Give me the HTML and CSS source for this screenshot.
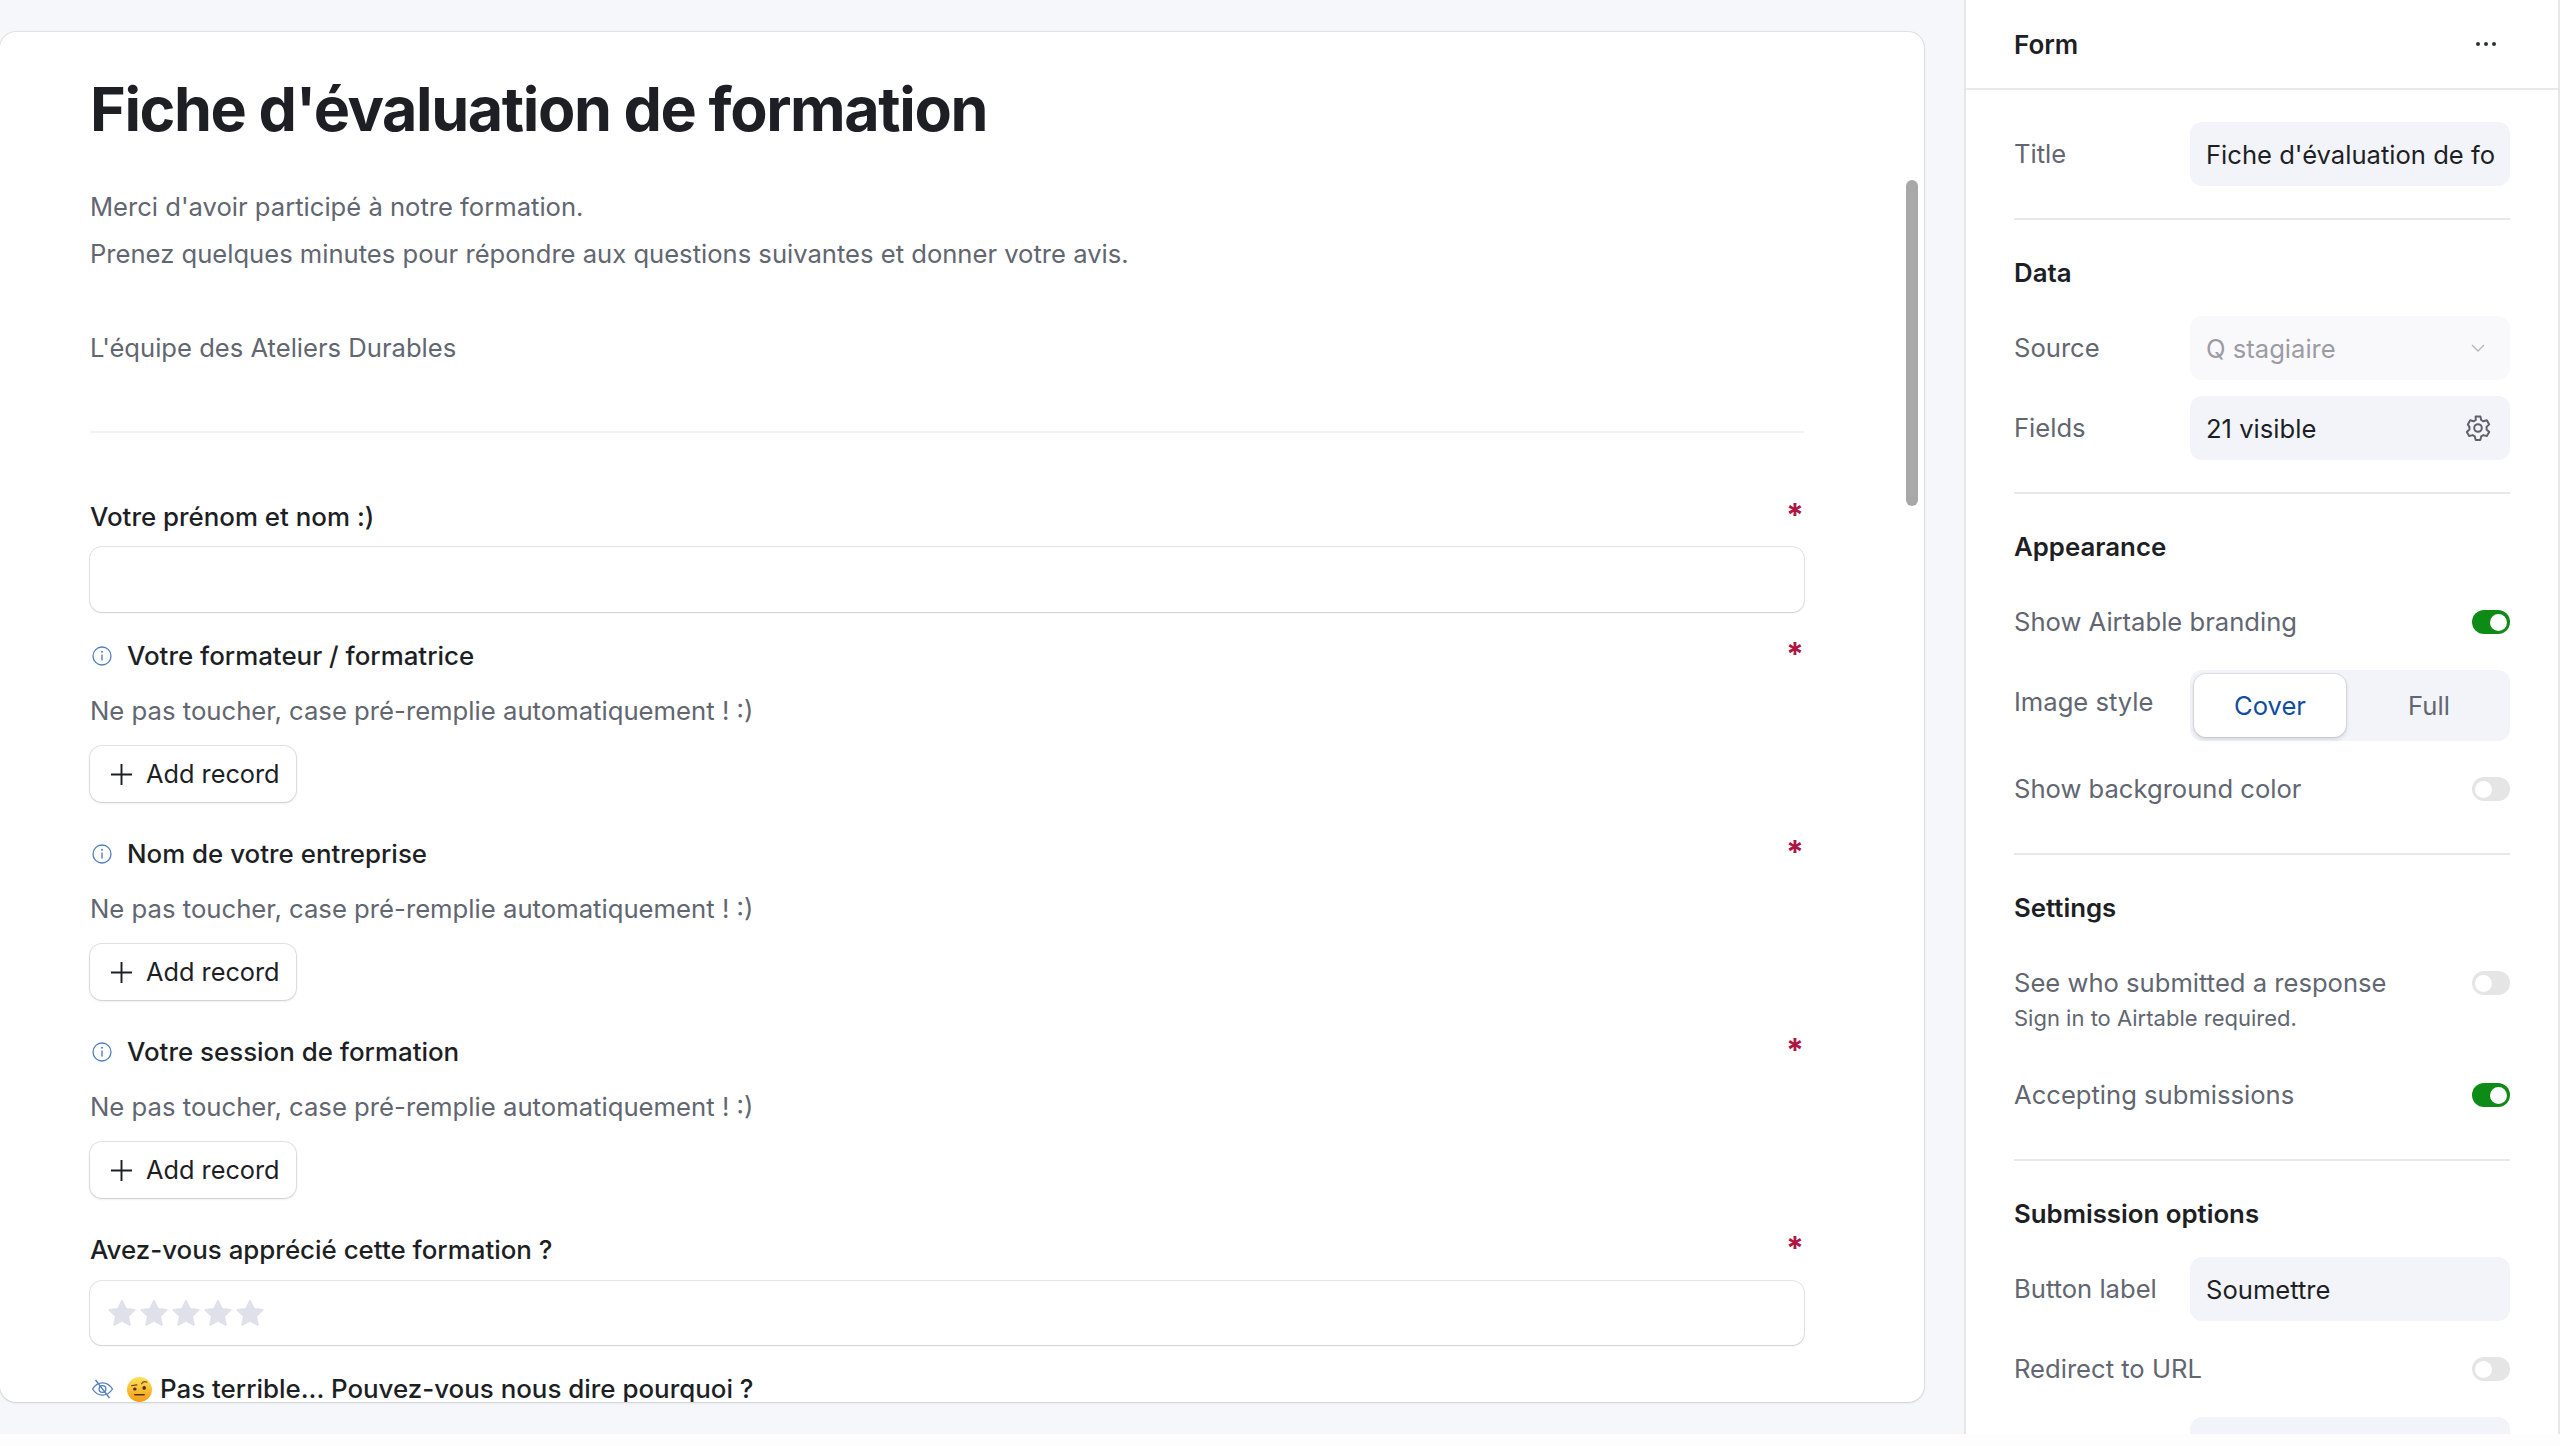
FILE: index.html
```html
<!DOCTYPE html>
<html lang="fr">
<head>
<meta charset="utf-8">
<title>Fiche d'évaluation de formation</title>
<link rel="stylesheet" href="styles.css">
</head>
<body>
<svg class="defs" width="0" height="0" aria-hidden="true">
  <defs>
    <symbol id="i-info" viewBox="0 0 20 20"><circle cx="10" cy="10" r="9" fill="none" stroke="currentColor" stroke-width="1.3"/><path d="M10 8.6v6" fill="none" stroke="currentColor" stroke-width="1.4"/><circle cx="10" cy="5.8" r="1" fill="currentColor"/></symbol>
    <symbol id="i-plus" viewBox="0 0 24 24"><path d="M12 1v22M1 12h22" fill="none" stroke="currentColor" stroke-width="2"/></symbol>
    <symbol id="i-star" viewBox="0 0 28 28"><path d="M14 1.5l3.9 8.2 8.9 1.2-6.5 6.2 1.6 8.9-7.9-4.3-7.9 4.3 1.6-8.9-6.5-6.2 8.9-1.2z" fill="currentColor" stroke="currentColor" stroke-width="1.6" stroke-linejoin="round"/></symbol>
  </defs>
</svg>
<div class="app">
  <main class="stage">
    <section class="card">
      <h1 class="form-title">Fiche d'évaluation de formation</h1>
      <div class="intro">
        <p>Merci d'avoir participé à notre formation.</p>
        <p>Prenez quelques minutes pour répondre aux questions suivantes et donner votre avis.</p>
        <p>&nbsp;</p>
        <p>L'équipe des Ateliers Durables</p>
      </div>
      <hr class="card-rule">

      <div class="field field-input">
        <div class="label-row"><span class="label-text">Votre prénom et nom :)</span><span class="req">*</span></div>
        <div class="box box-text"></div>
      </div>

      <div class="field field-link">
        <div class="label-row"><span class="label-text"><svg class="info"><use href="#i-info"/></svg>Votre formateur / formatrice</span><span class="req">*</span></div>
        <p class="hint">Ne pas toucher, case pré-remplie automatiquement ! :)</p>
        <div class="add"><svg class="plus"><use href="#i-plus"/></svg><span class="add-text">Add record</span></div>
      </div>

      <div class="field field-link">
        <div class="label-row"><span class="label-text"><svg class="info"><use href="#i-info"/></svg>Nom de votre entreprise</span><span class="req">*</span></div>
        <p class="hint">Ne pas toucher, case pré-remplie automatiquement ! :)</p>
        <div class="add"><svg class="plus"><use href="#i-plus"/></svg><span class="add-text">Add record</span></div>
      </div>

      <div class="field field-link">
        <div class="label-row"><span class="label-text"><svg class="info"><use href="#i-info"/></svg>Votre session de formation</span><span class="req">*</span></div>
        <p class="hint">Ne pas toucher, case pré-remplie automatiquement ! :)</p>
        <div class="add"><svg class="plus"><use href="#i-plus"/></svg><span class="add-text">Add record</span></div>
      </div>

      <div class="field field-input">
        <div class="label-row"><span class="label-text">Avez-vous apprécié cette formation ?</span><span class="req">*</span></div>
        <div class="box box-rating">
          <svg class="star"><use href="#i-star"/></svg>
          <svg class="star"><use href="#i-star"/></svg>
          <svg class="star"><use href="#i-star"/></svg>
          <svg class="star"><use href="#i-star"/></svg>
          <svg class="star"><use href="#i-star"/></svg>
        </div>
      </div>

      <div class="field">
        <div class="label-row"><span class="label-text">
          <svg class="eye" viewBox="0 0 22 20"><path d="M1 10c2.600-4 6-6.200 10-6.200S18.400 6 21 10c-2.600 4-6 6.200-10 6.200S3.600 14 1 10z" fill="none" stroke="currentColor" stroke-width="1.3"/><circle cx="11" cy="10" r="3.400" fill="none" stroke="currentColor" stroke-width="1.300"/><path d="M4 1l14 18" fill="none" stroke="currentColor" stroke-width="1.300"/></svg>
          <svg class="emoji" viewBox="0 0 24 24"><defs><linearGradient id="emo" x1="0" y1="0" x2="0" y2="1"><stop offset="0" stop-color="#fde25a"/><stop offset="1" stop-color="#f59a12"/></linearGradient></defs><circle cx="12" cy="12" r="12" fill="url(#emo)"/><ellipse cx="7.500" cy="11.500" rx="1.700" ry="1.500" fill="#4a3116"/><ellipse cx="16.500" cy="10.500" rx="1.700" ry="1.800" fill="#4a3116"/><path d="M4.500 8.300l5-.8M14 6.500c1.200-2 3.200-2.400 5-1.500" fill="none" stroke="#7a4d12" stroke-width="1.200" stroke-linecap="round"/><path d="M7.500 17h9" fill="none" stroke="#4a3116" stroke-width="1.500" stroke-linecap="round"/></svg>
          <span class="emoji-text">Pas terrible... Pouvez-vous nous dire pourquoi ?</span></span></div>
      </div>

      <div class="scrollbar"></div>
    </section>
  </main>

  <aside class="panel">
    <header class="panel-head">
      <span class="panel-name">Form</span>
      <svg class="dots" viewBox="0 0 20 4"><circle cx="2" cy="2" r="2"/><circle cx="10" cy="2" r="2"/><circle cx="18" cy="2" r="2"/></svg>
    </header>
    <div class="panel-body">
      <div class="row row-field">
        <span class="row-label">Title</span>
        <div class="control"><span class="control-text">Fiche d'évaluation de fo</span></div>
      </div>
      <hr class="rule">

      <h2 class="section">Data</h2>
      <div class="row row-field">
        <span class="row-label">Source</span>
        <div class="control control-off"><span class="control-text">Q stagiaire</span>
          <svg class="chev" viewBox="0 0 14 8"><path d="M1 1l6 6 6-6" fill="none" stroke="currentColor" stroke-width="1.400"/></svg>
        </div>
      </div>
      <div class="row row-field row-next">
        <span class="row-label">Fields</span>
        <div class="control"><span class="control-text">21 visible</span>
          <svg class="gear" viewBox="0 0 28 28"><path d="M11.600 2.500h4.800l.8 3.500 2.200 1.300 3.400-1 2.400 4.100-2.600 2.500v2.600l2.600 2.500-2.400 4.100-3.400-1-2.200 1.300-.8 3.500h-4.800l-.8-3.500-2.200-1.300-3.400 1-2.400-4.100 2.600-2.500v-2.600L3.800 10.400l2.400-4.100 3.400 1 2.200-1.300z" fill="none" stroke="currentColor" stroke-width="2" stroke-linejoin="round"/><circle cx="14" cy="14" r="3.800" fill="none" stroke="currentColor" stroke-width="2"/></svg>
        </div>
      </div>
      <hr class="rule">

      <h2 class="section">Appearance</h2>
      <div class="row row-toggle row-first"><span class="row-label">Show Airtable branding</span><span class="toggle on"><span class="knob"></span></span></div>
      <div class="row row-seg">
        <span class="row-label">Image style</span>
        <div class="seg"><span class="seg-item active">Cover</span><span class="seg-item">Full</span></div>
      </div>
      <div class="row row-toggle row-gap"><span class="row-label">Show background color</span><span class="toggle"><span class="knob"></span></span></div>
      <hr class="rule rule-wide">

      <h2 class="section">Settings</h2>
      <div class="row row-toggle row-first"><span class="row-label">See who submitted a response</span><span class="toggle"><span class="knob"></span></span></div>
      <p class="note">Sign in to Airtable required.</p>
      <div class="row row-toggle row-after-note"><span class="row-label">Accepting submissions</span><span class="toggle on"><span class="knob"></span></span></div>
      <hr class="rule rule-wide">

      <h2 class="section">Submission options</h2>
      <div class="row row-field">
        <span class="row-label">Button label</span>
        <div class="control"><span class="control-text">Soumettre</span></div>
      </div>
      <div class="row row-toggle row-gap"><span class="row-label">Redirect to URL</span><span class="toggle"><span class="knob"></span></span></div>
      <div class="row row-field row-gap">
        <span class="row-label"></span>
        <div class="control"></div>
      </div>
    </div>
  </aside>
</div>
</body>
</html>
```

FILE: styles.css
```css
* { box-sizing: border-box; }
html, body { margin: 0; height: 100%; }
body {
  background: #fdfdfd;
  font-family: Inter, "Noto Sans", "Liberation Sans", sans-serif;
  color: #1d1f25;
  overflow: hidden;
}
p, h1, h2 { margin: 0; }
.defs { display: block; height: 0; }

.app { display: flex; height: 1434px; overflow: hidden; }

.stage {
  width: 1964px;
  flex: none;
  padding: 32px 40px 32px 0;
  background: #f6f7fb;
}

.card {
  position: relative;
  height: 1370px;
  padding: 0 120px 0 90px;
  background: #fff;
  border-radius: 16px;
  box-shadow: 0 0 0 1px rgba(0, 0, 0, .07), 0 1px 3px rgba(0, 0, 0, .1);
  overflow: hidden;
}

.form-title {
  padding-top: 39px;
  font-size: 61px;
  line-height: 76px;
  font-weight: 700;
  letter-spacing: -1.4px;
  color: #1d1f25;
}

.intro {
  margin-top: 36px;
  font-size: 25.6px;
  line-height: 47px;
  color: #616670;
}

.card-rule {
  margin: 60px 0 0;
  border: 0;
  height: 2px;
  background: #f1f2f4;
}

.card-rule + .field { margin-top: 68px; }
.field-input { margin-bottom: 28px; }
.field-link { margin-bottom: 36px; }

.label-row {
  display: flex;
  justify-content: space-between;
  height: 32px;
  line-height: 32px;
  font-size: 25.9px;
  font-weight: 500;
}
.label-text { display: flex; align-items: center; white-space: nowrap; }
.req {
  width: 18px;
  font-size: 32px;
  font-weight: 700;
  line-height: 32px;
  color: #ae1545;
  margin-top: -1px;
}

.box {
  background: #fff;
  border-radius: 12px;
  box-shadow: 0 0 0 1px rgba(0, 0, 0, .1), 0 1px 2px rgba(0, 0, 0, .1);
}
.box-text { height: 65px; margin-top: 14px; }
.box-rating {
  display: flex;
  align-items: center;
  gap: 4px;
  height: 64px;
  margin-top: 15px;
  padding-left: 18px;
}
.star { width: 28px; height: 28px; color: #dfe0ea; }

.info { width: 20px; height: 20px; margin: 0 15px 0 2px; color: #4f7fc0; flex: none; }
.eye { width: 23px; height: 20px; margin: 0 13px 0 1px; color: #4f7fc0; flex: none; }
.emoji { width: 25px; height: 25px; margin-right: 8px; flex: none; }

.hint {
  margin-top: 23px;
  font-size: 25.7px;
  line-height: 32px;
  color: #616670;
}

.add {
  display: inline-flex;
  align-items: center;
  height: 56px;
  width: 206px;
  margin-top: 19px;
  padding-left: 20px;
  font-size: 25.3px;
  background: #fff;
  border-radius: 12px;
  box-shadow: 0 0 0 1px rgba(0, 0, 0, .1), 0 1px 3px rgba(0, 0, 0, .12);
  vertical-align: top;
}
.add-text { margin-top: -2px; }
.plus { width: 23px; height: 23px; margin-right: 13px; color: #1d1f25; flex: none; }

.scrollbar {
  position: absolute;
  top: 148px;
  right: 6px;
  width: 12px;
  height: 326px;
  border-radius: 6px;
  background: #a8a8a8;
}

.panel {
  width: 596px;
  flex: none;
  background: #fff;
  border-left: 2px solid #e6e6e8;
  border-right: 2px solid #e6e6e8;
  overflow: hidden;
}

.panel-head {
  display: flex;
  align-items: center;
  justify-content: space-between;
  height: 90px;
  padding: 0 48px;
  border-bottom: 2px solid #e8e8ea;
}
.panel-name { font-size: 26px; font-weight: 600; }
.dots { width: 20px; height: 4px; fill: #2f3138; margin-right: 14px; }

.panel-body { padding: 32px 48px 0; }

.rule { margin: 32px 0 0; border: 0; height: 2px; background: #e8e8ea; }
.rule-wide { margin-top: 48px; }

.section {
  height: 32px;
  margin-top: 37px;
  font-size: 25.8px;
  line-height: 32px;
  font-weight: 600;
}

.row { display: flex; align-items: center; justify-content: space-between; }
.row-label { font-size: 25.6px; color: #616670; white-space: nowrap; margin-top: -1px; }
.row-field { height: 64px; }
.section + .row-field { margin-top: 27px; }
.row-next { margin-top: 16px; }
.row-toggle { height: 32px; }
.row-first { margin-top: 43px; }
.row-gap { margin-top: 32px; }
.row-after-note { margin-top: 49px; }
.row-seg { height: 71px; margin-top: 32px; align-items: flex-start; }
.row-seg .row-label { margin-top: 16px; }

.control {
  display: flex;
  align-items: center;
  justify-content: space-between;
  width: 320px;
  height: 64px;
  padding: 0 16px;
  border-radius: 12px;
  background: #f3f4f9;
  font-size: 25.6px;
  color: #1d1f25;
  overflow: hidden;
}
.control-text { white-space: nowrap; margin-top: 1px; }
.control-off { background: #f9f9fc; color: #9b9ca3; }
.chev { width: 14px; height: 8px; margin-right: 9px; color: #b5b6bb; flex: none; }
.gear { width: 28px; height: 28px; margin-right: 2px; color: #5e616b; flex: none; }

.toggle {
  display: flex;
  align-items: center;
  width: 38px;
  height: 24px;
  padding: 0 3px;
  border-radius: 12px;
  background: #e5e5e6;
}
.toggle.on { justify-content: flex-end; background: #0e8a17; }
.knob { width: 17px; height: 17px; border-radius: 50%; background: #fff; }

.seg {
  display: flex;
  width: 320px;
  height: 71px;
  padding: 4px;
  border-radius: 12px;
  background: #f3f4f9;
}
.seg-item {
  display: flex;
  align-items: center;
  justify-content: center;
  width: 152px;
  height: 63px;
  font-size: 25.6px;
  color: #616670;
}
.seg-item + .seg-item { flex: 1; padding-left: 6px; }
.seg-item.active {
  background: #fff;
  border-radius: 12px;
  color: #0f4da0;
  box-shadow: 0 0 0 1px rgba(0, 0, 0, .08), 0 2px 4px rgba(0, 0, 0, .15);
}

.note {
  margin-top: 7px;
  font-size: 22px;
  line-height: 24px;
  color: #616670;
}
```
